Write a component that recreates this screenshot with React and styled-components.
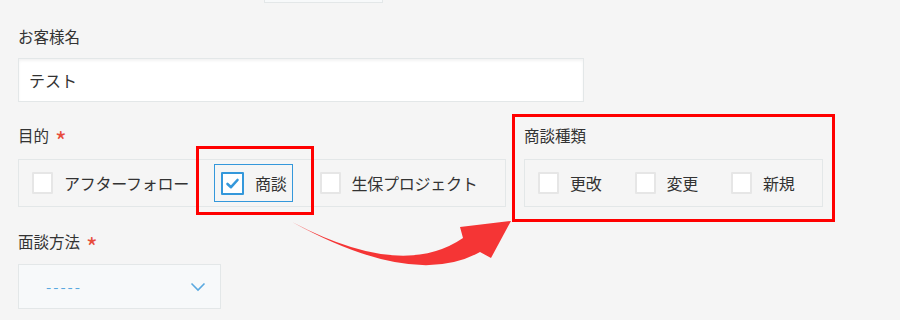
import React, { useState } from 'react';
import styled, { createGlobalStyle } from 'styled-components';

const GlobalStyle = createGlobalStyle`
  body {
    margin: 0;
    background: #f5f5f5;
    font-family: "Noto Sans CJK JP", "Noto Sans", sans-serif;
    color: #333;
  }
`;

const Page = styled.div`
  position: relative;
  width: 900px;
  height: 320px;
  padding-left: 18px;
  box-sizing: border-box;
  overflow: hidden;
`;

const TopStub = styled.div`
  margin-left: 246px;
  width: 119px;
  height: 3px;
  box-sizing: border-box;
  background: #f7f9fa;
  border: 1px solid #e3e7e8;
  border-top: none;
`;

const Field = styled.div`
  display: flex;
  flex-direction: column;
  margin-top: ${(p) => p.top || 0}px;
`;

const Label = styled.div`
  font-size: 15.5px;
  line-height: 20px;
  height: 20px;
  margin-bottom: ${(p) => p.gap}px;
  display: flex;
  align-items: center;
`;

const Required = styled.span`
  color: #e74c3c;
  font-size: 25px;
  margin-left: 6px;
  line-height: 20px;
  position: relative;
  top: 5px;
`;

const TextInput = styled.input`
  width: 566px;
  height: 44px;
  box-sizing: border-box;
  border: 1px solid #e3e7e8;
  background: #fff;
  box-shadow: inset 0 2px 3px rgba(0, 0, 0, 0.05);
  padding: 0 10px;
  font-family: inherit;
  font-size: 16px;
  color: #333;
  outline: none;
`;

const Row = styled.div`
  display: flex;
  gap: 18px;
  margin-top: 23px;
`;

const Group = styled.div`
  display: flex;
  align-items: center;
  width: ${(p) => p.width}px;
  height: 48px;
  box-sizing: border-box;
  border: 1px solid #e3e7e8;
  padding-left: 5px;
`;

const Item = styled.label`
  display: flex;
  align-items: center;
  gap: 11px;
  height: 38px;
  box-sizing: border-box;
  padding: 0 5px 0 7px;
  margin-right: 19px;
  border: 1px solid ${(p) => (p.checked ? '#3498db' : 'transparent')};
  font-size: 16px;
  letter-spacing: -0.25px;
  white-space: nowrap;
  cursor: pointer;
`;

const Box = styled.span`
  width: ${(p) => (p.checked ? 23 : 21)}px;
  height: ${(p) => (p.checked ? 23 : 22)}px;
  margin-left: ${(p) => (p.checked ? -1 : 0)}px;
  box-sizing: border-box;
  background: #fff;
  border: ${(p) => (p.checked ? '2px solid #3498db' : '2px solid #e6e6e6')};
  border-radius: 1px;
  display: flex;
  align-items: center;
  justify-content: center;
`;

const SelectBox = styled.div`
  width: 203px;
  height: 45px;
  box-sizing: border-box;
  border: 1px solid #e3e7e8;
  background: #f7f9fa;
  display: flex;
  align-items: center;
  justify-content: space-between;
  padding: 0 14px 0 27px;
`;

const Placeholder = styled.span`
  color: #5aa9e0;
  font-size: 15px;
  letter-spacing: 2px;
`;

const Highlight = styled.div`
  position: absolute;
  left: ${(p) => p.x}px;
  top: ${(p) => p.y}px;
  width: ${(p) => p.w}px;
  height: ${(p) => p.h}px;
  box-sizing: border-box;
  border: 3px solid #ff0000;
  pointer-events: none;
`;

const ArrowLayer = styled.svg`
  position: absolute;
  left: 0;
  top: 0;
  pointer-events: none;
`;

const Check = () => (
  <svg width="15" height="13" viewBox="0 0 15 13">
    <path d="M2.5 7 L6 10.2 L12.5 3" fill="none" stroke="#3498db" strokeWidth="2.6" strokeLinecap="round" strokeLinejoin="round" />
  </svg>
);

const Checkbox = ({ label, checked, onToggle }) => (
  <Item checked={checked} onClick={onToggle}>
    <Box checked={checked}>{checked && <Check />}</Box>
    {label}
  </Item>
);

const CheckGroup = ({ options, values, onToggle, width }) => (
  <Group width={width}>
    {options.map((o) => (
      <Checkbox key={o} label={o} checked={!!values[o]} onToggle={() => onToggle(o)} />
    ))}
  </Group>
);

export default function App() {
  const [purpose, setPurpose] = useState({ 商談: true });
  const [kind, setKind] = useState({});

  const toggle = (setter) => (key) => setter((s) => ({ ...s, [key]: !s[key] }));

  return (
    <Page>
      <GlobalStyle />
      <TopStub />

      <Field top={23}>
        <Label gap={12}>お客様名</Label>
        <TextInput defaultValue="テスト" />
      </Field>

      <Row>
        <Field>
          <Label gap={14}>
            目的<Required>*</Required>
          </Label>
          <CheckGroup
            width={488}
            options={['アフターフォロー', '商談', '生保プロジェクト']}
            values={purpose}
            onToggle={toggle(setPurpose)}
          />
        </Field>
        <Field>
          <Label gap={14}>商談種類</Label>
          <CheckGroup width={299} options={['更改', '変更', '新規']} values={kind} onToggle={toggle(setKind)} />
        </Field>
      </Row>

      <Field top={24}>
        <Label gap={13}>
          面談方法<Required>*</Required>
        </Label>
        <SelectBox>
          <Placeholder>-----</Placeholder>
          <svg width="16" height="10" viewBox="0 0 16 10">
            <path d="M1.5 1.5 L8 8 L14.5 1.5" fill="none" stroke="#5aa9e0" strokeWidth="1.6" />
          </svg>
        </SelectBox>
      </Field>

      <Highlight x={196} y={146} w={118} h={69} />
      <Highlight x={512} y={114} w={323} h={108} />

      <ArrowLayer width="900" height="320">
        <path
          d="M292 222 Q402 280 463 238 L460 227 L511 221 L491 258 L480 252 Q414 289 292 222 Z"
          fill="#f53535"
        />
      </ArrowLayer>
    </Page>
  );
}
